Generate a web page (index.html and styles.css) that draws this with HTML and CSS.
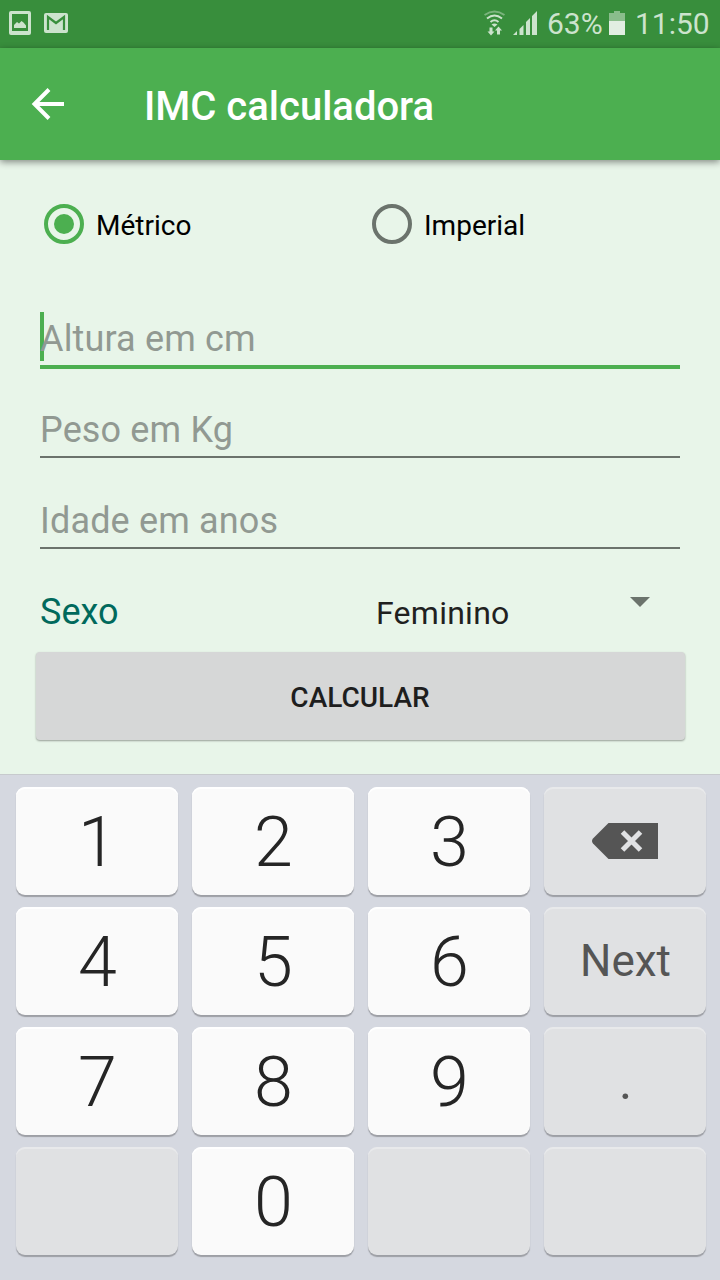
FILE: index.html
```html
<!DOCTYPE html>
<html lang="pt">
<head>
<meta charset="utf-8">
<title>IMC calculadora</title>
<link rel="stylesheet" href="styles.css">
</head>
<body>
<div class="status">
  <svg class="status-left" width="80" height="48" viewBox="0 0 80 48" fill="#cce3cd">
    <path fill-rule="evenodd" d="M11 11h18a2 2 0 0 1 2 2v20a2 2 0 0 1-2 2H11a2 2 0 0 1-2-2V13a2 2 0 0 1 2-2zM12 14v17h16V14z"/>
    <path d="M14 28v-3l3-3 2 1.500 2.500-2.500 2 1.500 2.500 3v2.500z"/>
    <rect x="44" y="13" width="24" height="20" rx="2"/>
    <path d="M48 30V17l8 6 8-6v13" fill="none" stroke="#388e3c" stroke-width="2.200"/>
  </svg>
  <div class="status-right">
    <svg width="56" height="48" viewBox="484 0 56 48" fill="#cce3cd">
      <g fill="none" stroke="#cce3cd" stroke-width="2">
        <path d="M484.500 15q10-7 20 0" opacity=".45"/>
        <path d="M487 18.500q7.500-6 15 0M490.500 22q4-3.500 8 0"/>
      </g>
      <path d="M491.500 24.500q3-2 6 0l-3 2.500z"/>
      <path d="M489.500 27.500h3v4h2l-3.500 4-3.500-4h2zM497 34.500v-4h-2l3.500-4 3.500 4h-2v4z"/>
      <path d="M513 35l4-4v4zM519.500 35v-6l4-4v10zM526 35V22l4-4v17zM532 35V16l5-5v24z"/>
    </svg>
    <span class="percent">63%</span>
    <svg class="battery" width="16" height="48" viewBox="0 0 16 48">
      <path d="M0 13h5v-2h6v2h5v8H0z" fill="#8abd8c"/>
      <path d="M0 21h16v14H0z" fill="#e1eee2"/>
    </svg>
    <span class="clock">11:50</span>
  </div>
</div>
<header class="appbar">
  <svg class="back" width="36" height="36" viewBox="30 86 36 36" fill="none" stroke="#fff" stroke-width="4">
    <path d="M64 104H35M49 89.500L34.500 104 49 118.500"/>
  </svg>
  <h1 class="title">IMC calculadora</h1>
</header>
<main class="form">
  <div class="units">
    <label class="radio"><svg width="40" height="40" viewBox="0 0 40 40"><circle cx="20" cy="20" r="18" fill="none" stroke="#4caf50" stroke-width="4"/><circle cx="20" cy="20" r="10" fill="#4caf50"/></svg><span>Métrico</span></label>
    <label class="radio"><svg width="40" height="40" viewBox="0 0 40 40"><circle cx="20" cy="20" r="18" fill="none" stroke="#6b736c" stroke-width="4"/></svg><span>Imperial</span></label>
  </div>
  <div class="field field-active"><span>Altura em cm</span></div>
  <div class="field field-weight"><span>Peso em Kg</span></div>
  <div class="field"><span>Idade em anos</span></div>
  <div class="sex">
    <span class="sex-label">Sexo</span>
    <span class="sex-value">Feminino</span>
    <svg class="caret" width="20" height="10" viewBox="0 0 20 10"><path d="M0 0h20L10 10z" fill="#6b736c"/></svg>
  </div>
  <div class="calc">CALCULAR</div>
</main>
<div class="keyboard">
  <div class="key">1</div><div class="key">2</div><div class="key">3</div>
  <div class="key key-alt"><svg class="erase" width="66" height="36" viewBox="0 0 66 36"><path d="M16.500 0H66v36H16.500L1 20.500Q-1 18 1 15.500z" fill="#555"/><path d="M30.500 9l18 18M48.500 9l-18 18" stroke="#e0e1e3" stroke-width="5"/></svg></div>
  <div class="key">4</div><div class="key">5</div><div class="key">6</div><div class="key key-alt key-next">Next</div>
  <div class="key">7</div><div class="key">8</div><div class="key">9</div><div class="key key-alt key-dot">.</div>
  <div class="key key-alt"></div><div class="key">0</div><div class="key key-alt"></div><div class="key key-alt"></div>
</div>
</body>
</html>
```
FILE: styles.css
```css
* { box-sizing: border-box; }
body {
  margin: 0;
  width: 720px;
  height: 1280px;
  overflow: hidden;
  display: flex;
  flex-direction: column;
  background: #e8f5e9;
  font-family: Roboto, "Liberation Sans", sans-serif;
}
svg { display: block; flex: none; }
.status {
  height: 48px;
  flex: none;
  display: flex;
  justify-content: space-between;
  background: #388e3c;
  color: #cce3cd;
  font-size: 30px;
  line-height: 48px;
}
.status-right { display: flex; width: 236px; white-space: nowrap; }
.percent { width: 62px; margin-left: 7px; }
.clock { margin-left: 10px; }
.appbar {
  height: 112px;
  flex: none;
  display: flex;
  align-items: center;
  padding-left: 30px;
  background: #4caf50;
  box-shadow: 0 2px 7px rgba(0, 0, 0, .45);
}
.title {
  margin: 6px 0 0 78px;
  font-size: 40px;
  font-weight: 500;
  line-height: 48px;
  color: #fff;
}
.form { height: 614px; flex: none; padding: 44px 35px 0; }
.units { display: grid; grid-template-columns: 328px 1fr; padding-left: 9px; height: 106px; }
.radio { display: flex; gap: 12px; height: 40px; font-size: 28px; line-height: 43px; color: #000; }
.field {
  height: 91px;
  margin: 0 5px;
  padding-top: 38px;
  border-bottom: 2px solid #6b736c;
  font-size: 36px;
  line-height: 50px;
  letter-spacing: .15px;
  color: #919992;
}
.field-active {
  height: 59px;
  padding-top: 2px;
  border-bottom: 4px solid #4caf50;
  line-height: 54px;
}
.field-active span {
  display: block;
  height: 49px;
  box-shadow: inset 4px 0 #4caf50;
}
.field-weight { height: 89px; padding-top: 36px; }
.sex { display: flex; height: 103px; padding: 38px 0 0 5px; line-height: 50px; }
.sex-label { width: 336px; font-size: 36px; color: #00695c; }
.sex-value { width: 254px; font-size: 32px; line-height: 52px; letter-spacing: .25px; color: #1f211f; }
.caret { margin-top: 10px; }
.calc {
  height: 88px;
  margin: 0 .5px;
  border-radius: 4px;
  background: #d6d7d7;
  box-shadow: 0 1px 2px rgba(0, 0, 0, .35);
  text-align: center;
  font-size: 28px;
  font-weight: 500;
  line-height: 91px;
  color: #1e1e1e;
}
.keyboard {
  flex: 1;
  display: grid;
  grid-template-columns: repeat(4, 162px);
  grid-auto-rows: 108px;
  gap: 12px 14px;
  align-content: start;
  padding: 12px 0 0 16px;
  border-top: 1px solid #c7cacd;
  background: #d5d8e0;
}
.key {
  padding-left: 1px;
  border-radius: 9px;
  background: #fafafa;
  box-shadow: 0 2px 1px #9d9fa5, inset 0 2px #fff;
  text-align: center;
  font-size: 70px;
  font-weight: 300;
  line-height: 110px;
  color: #252525;
}
.key-alt {
  padding-left: 0;
  background: #e0e1e3;
  box-shadow: 0 2px 1px #9d9fa5, inset 0 2px #e8e9eb;
  font-size: 44px;
  font-weight: 400;
  line-height: 108px;
  color: #555;
}
.key-next { padding-left: 1px; line-height: 109px; }
.key-dot { padding-left: 1px; font-size: 50px; line-height: 110px; }
.erase { margin: 36px 0 0 48px; }
```
